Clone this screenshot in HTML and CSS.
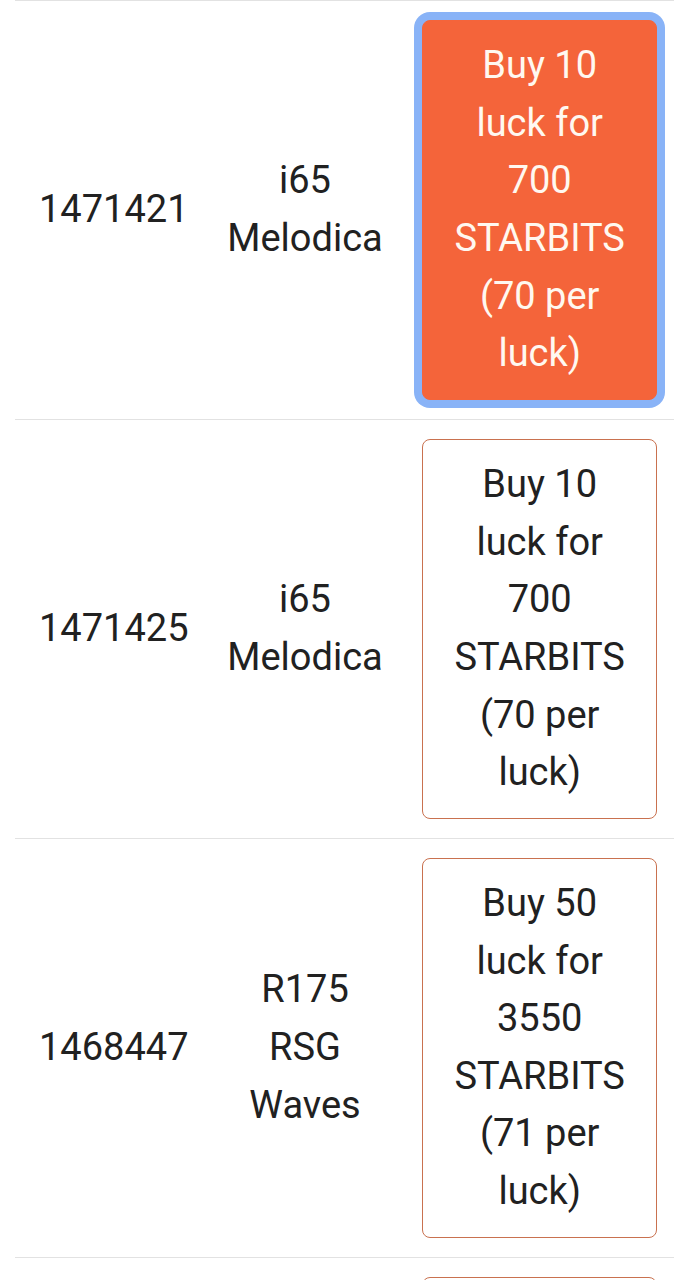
FILE: index.html
```html
<!DOCTYPE html>
<html lang="en">
<head>
<meta charset="UTF-8" />
<title>Luck offers</title>
<link rel="stylesheet" href="styles.css">
</head>
<body>

<table class="offers">
  <tr>
    <td class="id">1471421</td>
    <td class="item">i65 Melodica</td>
    <td class="buy"><button class="btn btn-filled">Buy 10 luck for 700 STARBITS (70 per luck)</button></td>
  </tr>
  <tr>
    <td class="id">1471425</td>
    <td class="item">i65 Melodica</td>
    <td class="buy"><button class="btn">Buy 10 luck for 700 STARBITS (70 per luck)</button></td>
  </tr>
  <tr>
    <td class="id">1468447</td>
    <td class="item">R175 RSG Waves</td>
    <td class="buy"><button class="btn">Buy 50 luck for 3550 STARBITS (71 per luck)</button></td>
  </tr>
  <tr>
    <td class="id">1468450</td>
    <td class="item">R175 RSG Waves</td>
    <td class="buy"><button class="btn">Buy 10 luck for 710 STARBITS (71 per luck)</button></td>
  </tr>
</table>

</body>
</html>
```

FILE: styles.css
```css
body { margin: 0; background: #fff; color: #212121; font-family: Roboto, "Noto Sans", sans-serif; overflow: hidden; }
.offers { border-collapse: collapse; margin-left: 15px; width: 665px; table-layout: fixed; font-size: 38px; line-height: 57.6px; }
.offers td { border-top: 1px solid #e2e2e2; padding: 19.2px; vertical-align: middle; }
.offers .id { width: 158px; text-align: left; padding-left: 24px; padding-right: 10px; }
.offers .item { width: 160px; text-align: center; padding-left: 18px; padding-right: 18px; }
.offers .buy { text-align: left; }
.btn { width: 235px; font: inherit; line-height: 57.6px; color: #212121; background: #fff; border: 1.5px solid #c9714f; border-radius: 8px; padding: 16px 26px; text-align: center; cursor: pointer; display: block; }
.btn-filled { background: #f4643a; border-color: #f4643a; color: #fff8f0; box-shadow: 0 0 0 8px #89b3f7; }
```
